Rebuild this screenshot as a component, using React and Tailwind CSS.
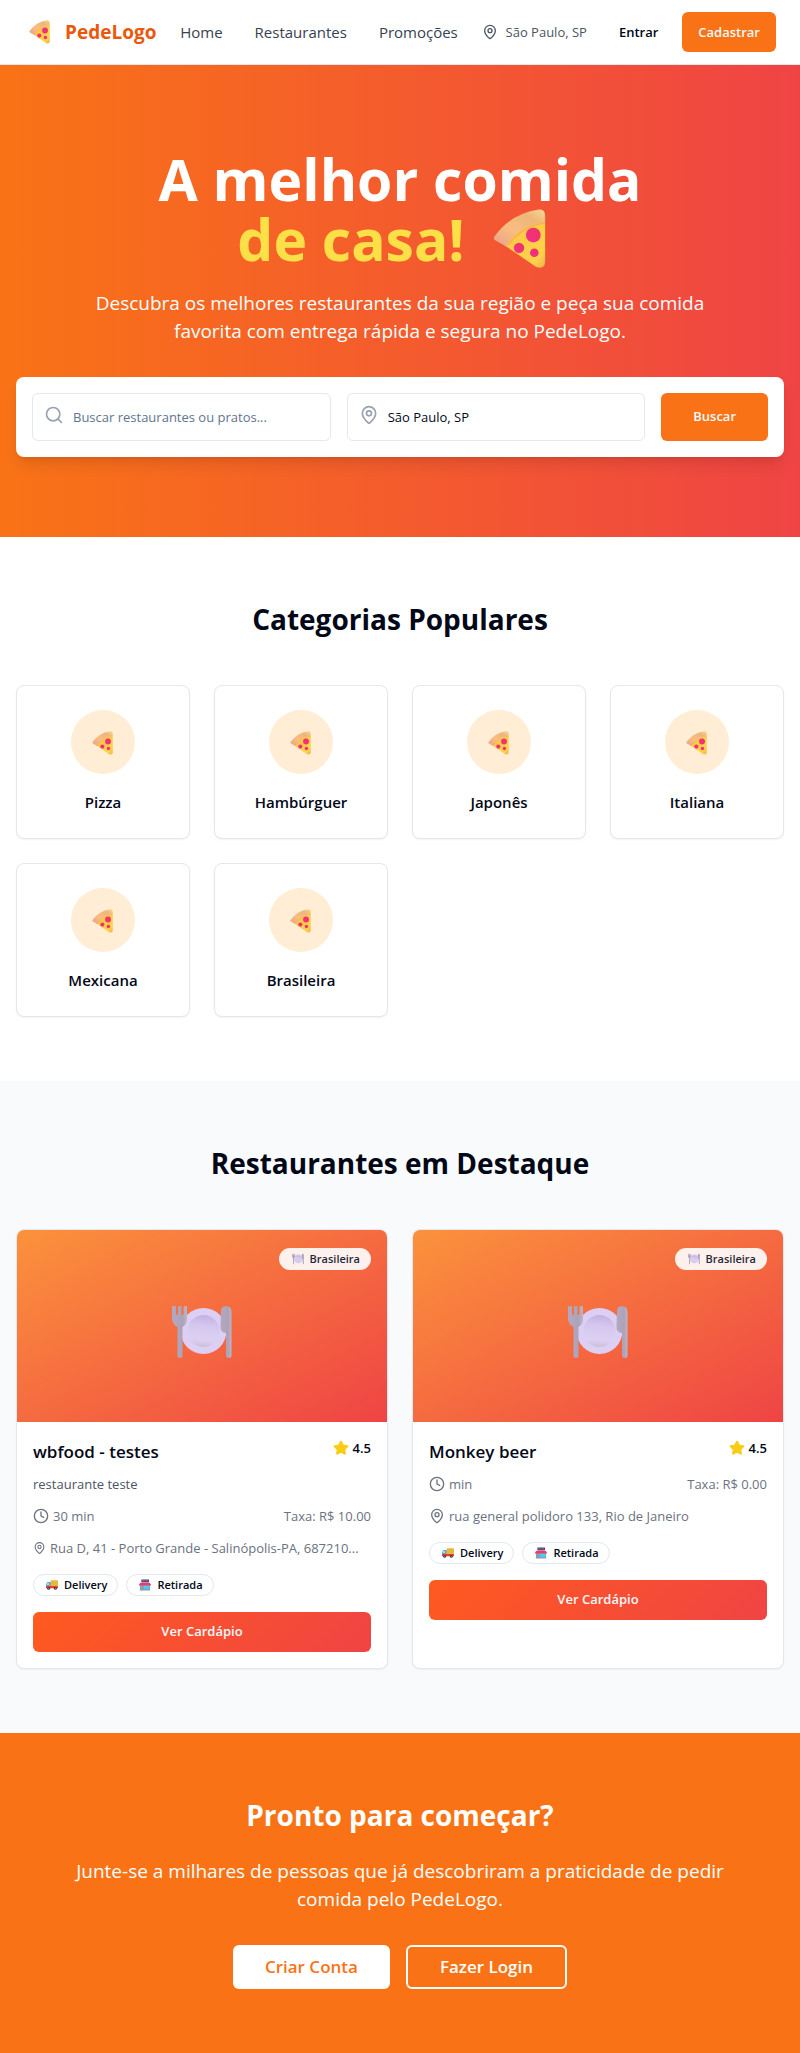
import React from "react";
import { Clock, MapPin, Search, Star } from "lucide-react";

function Pizza({ className }) {
  const id = React.useId();
  return (
    <svg viewBox="3 0 82 61" className={className} aria-hidden="true">
      <defs>
        <linearGradient id={id + "c"} x1="0" y1="1" x2="1" y2="0">
          <stop offset="0" stopColor="#e9a08a" />
          <stop offset="0.4" stopColor="#f9bd80" />
          <stop offset="0.75" stopColor="#edb67c" />
          <stop offset="1" stopColor="#fbd98f" />
        </linearGradient>
        <linearGradient id={id + "y"} x1="0" y1="0" x2="1" y2="1">
          <stop offset="0" stopColor="#fba94c" />
          <stop offset="0.3" stopColor="#fecb44" />
          <stop offset="0.8" stopColor="#ffd24c" />
          <stop offset="1" stopColor="#eeb04a" />
        </linearGradient>
        <linearGradient id={id + "p"} x1="1" y1="0" x2="0" y2="1">
          <stop offset="0" stopColor="#e8365f" />
          <stop offset="1" stopColor="#fb2c8e" />
        </linearGradient>
      </defs>
      <path d="M25 36 Q41 16 67.5 12 V54 Q67 62 58.500 59 Z" fill={"url(#" + id + "y)"} />
      <path d="M16 28 Q32 5 61 0.5 Q67 0 67.5 6 V13 Q42 16 28 38 L19 33 Q14 31 16 28 Z" fill={"url(#" + id + "c)"} />
      <path d="M30 37 Q43 18 67 14" fill="none" stroke="#f59a55" strokeWidth="1.5" opacity=".55" />
      <circle cx="55.500" cy="26.500" r="7.5" fill={"url(#" + id + "p)"} />
      <circle cx="41" cy="39.500" r="5.3" fill={"url(#" + id + "p)"} />
      <circle cx="56.500" cy="44.500" r="4.400" fill={"url(#" + id + "p)"} />
    </svg>
  );
}

function Plate({ className }) {
  const id = React.useId();
  return (
    <svg viewBox="0 0 60 52" className={className} aria-hidden="true">
      <defs>
        <linearGradient id={id + "i"} x1="0.6" y1="0" x2="0.5" y2="1">
          <stop offset="0" stopColor="#c4b0e4" />
          <stop offset="0.35" stopColor="#d5c8ee" />
          <stop offset="0.8" stopColor="#dcd0f2" />
          <stop offset="1" stopColor="#c9c0d8" />
        </linearGradient>
        <linearGradient id={id + "m"} x1="0" y1="0" x2="1" y2="0">
          <stop offset="0" stopColor="#b3a8c2" />
          <stop offset="0.7" stopColor="#ada3b8" />
          <stop offset="1" stopColor="#c0b4c6" />
        </linearGradient>
      </defs>
      <circle cx="31.500" cy="25" r="23" fill="#dccff3" />
      <circle cx="31.500" cy="25" r="16" fill={"url(#" + id + "i)"} />
      <path d="M0 1 Q0 0 1 0 H3 Q4 0 4 1 V8 Q5 10 6 8 V1 Q6 0 7 0 H8.500 Q9.500 0 9.500 1 V8 Q10.500 10 11.500 8 V1 Q11.500 0 12.500 0 H14 Q15 0 15 1 V13 Q15 18 10.500 21 V49.500 Q10.500 52 8 52 Q5.500 52 5.500 49.500 V21 Q0 18 0 13 Z" fill={"url(#" + id + "m)"} />
      <path d="M49 6 Q49 0 54 0 Q59.500 0 59.500 6 V49.500 Q59.500 52 57 52 Q54 52 54 49.500 V27 Q48 27 48.500 19 Z" fill={"url(#" + id + "m)"} />
    </svg>
  );
}

function Truck() {
  return (
    <svg viewBox="0 0 36 30" className="h-2.5 w-3 shrink-0" aria-hidden="true">
      <path d="M15 1 H34 Q36 1 36 3 V19 H14 V2 Z" fill="#e5b93f" />
      <path d="M5 6 H14 V20 H0 V15 Q1 7 5 6 Z" fill="#4ba3e8" />
      <path d="M4 9 H9 V15 H2 Q2 11 4 9 Z" fill="#9fe3fb" />
      <path d="M10 14 L14 6 V20 H9 Z" fill="#f98a2b" />
      <rect y="18" width="36" height="7" rx="2" fill="#e8402f" />
      <circle cx="8" cy="25" r="4.500" fill="#4b3553" />
      <circle cx="28" cy="25" r="4.500" fill="#4b3553" />
      <circle cx="8" cy="25" r="1.600" fill="#b7a6bd" />
      <circle cx="28" cy="25" r="1.600" fill="#b7a6bd" />
    </svg>
  );
}

function Store() {
  return (
    <svg viewBox="0 0 36 33" className="h-3 w-3 shrink-0" aria-hidden="true">
      <rect x="3" y="16" width="30" height="16" fill="#7fa6bd" />
      <rect x="7" y="0" width="23" height="8" rx="1" fill="#4a3a66" />
      <path d="M10 2 V6 M14 2 V6 M18 2 V6 M22 2 V6 M26 2 V6" stroke="#c9a5d8" strokeWidth="1.500" />
      <rect x="9" y="8" width="19" height="3" fill="#b59cc4" />
      <path d="M4 10 H32 L36 16 V18 H0 V16 Z" fill="#f0386b" />
      <rect x="5" y="20" width="7" height="12" fill="#8a9db5" />
      <rect x="15" y="19" width="16" height="9" fill="#48cdf5" />
      <path d="M2 32 H34" stroke="#8d8798" strokeWidth="1.500" />
    </svg>
  );
}

const categories = ["Pizza", "Hambúrguer", "Japonês", "Italiana", "Mexicana", "Brasileira"];

const restaurants = [
  {
    name: "wbfood - testes",
    description: "restaurante teste",
    time: "30 min",
    fee: "Taxa: R$ 10.00",
    address: "Rua D, 41 - Porto Grande - Salinópolis-PA, 687210...",
    pin: "h-4 w-[13px] shrink-0",
  },
  {
    name: "Monkey beer",
    time: "min",
    fee: "Taxa: R$ 0.00",
    address: "rua general polidoro 133, Rio de Janeiro",
    pin: "h-4 w-4 shrink-0",
  },
];

function Header() {
  return (
    <header className="flex h-[65px] items-center justify-between border-b border-slate-200 bg-white px-6">
      <a href="#" className="flex items-center gap-2">
        <Pizza className="h-6 w-[33px]" />
        <span className="text-[19px] leading-7 font-bold text-[#ea580c]">PedeLogo</span>
      </a>
      <nav className="flex gap-8 text-[15px] leading-6 text-[#374151]">
        <a href="#">Home</a>
        <a href="#restaurantes">Restaurantes</a>
        <a href="#promocoes">Promoções</a>
      </nav>
      <div className="flex items-center gap-4">
        <div className="flex items-center gap-2 text-[13px] leading-5 text-[#4b5563]">
          <MapPin size={16} />
          <span>São Paulo, SP</span>
        </div>
        <div className="flex items-center gap-2 text-[13px] leading-5 font-semibold">
          <a href="#entrar" className="px-4 py-2.5">Entrar</a>
          <a href="#cadastrar" className="rounded-md bg-[#f97316] px-4 py-2.5 text-slate-50">Cadastrar</a>
        </div>
      </div>
    </header>
  );
}

function Hero() {
  return (
    <section className="bg-linear-to-r/srgb from-[#f97316] to-[#ef4444] px-4 py-20 text-center text-white">
      <h1 className="mb-5 pt-1 text-[57px] leading-[60px] font-bold">
        A melhor comida
        <span className="flex items-center justify-center gap-4 text-[#fde047]">
          de casa!
          <Pizza className="h-[60px] w-[82px]" />
        </span>
      </h1>
      <p className="mx-auto mb-8 max-w-2xl text-[19px] leading-7">
        Descubra os melhores restaurantes da sua região e peça sua comida favorita com entrega rápida e segura no
        PedeLogo.
      </p>
      <form className="flex gap-4 rounded-lg bg-white p-4 shadow-lg" onSubmit={(e) => e.preventDefault()}>
        <label className="relative flex-1">
          <Search size={20} className="absolute top-3 left-3 text-gray-400" />
          <input
            aria-label="Buscar restaurantes ou pratos"
            placeholder="Buscar restaurantes ou pratos..."
            className="h-12 w-full rounded-md border border-slate-200 pr-3 pl-10 text-[13px] text-[#020817] placeholder:text-slate-500"
          />
        </label>
        <label className="relative flex-1">
          <MapPin size={20} className="absolute top-3 left-3 text-gray-400" />
          <input
            aria-label="Localização"
            defaultValue="São Paulo, SP"
            className="h-12 w-full rounded-md border border-slate-200 pr-3 pl-10 text-[13px] text-[#020817]"
          />
        </label>
        <button type="submit" className="h-12 rounded-md bg-[#f97316] px-8 text-[13px] font-semibold text-slate-50">
          Buscar
        </button>
      </form>
    </section>
  );
}

function Categories() {
  return (
    <section className="px-4 py-16">
      <h2 className="mb-12 text-center text-[28px] leading-9 font-bold">Categorias Populares</h2>
      <div className="grid grid-cols-4 gap-6">
        {categories.map((name) => (
          <a
            key={name}
            href="#restaurantes"
            className="flex flex-col items-center gap-4 rounded-lg border border-slate-200 bg-white p-6 shadow-xs"
          >
            <span className="flex size-16 items-center justify-center rounded-full bg-[#ffedd5] pt-0.5">
              <Pizza className="h-6 w-[33px]" />
            </span>
            <h3 className="text-[15px] leading-6 font-semibold">{name}</h3>
          </a>
        ))}
      </div>
    </section>
  );
}

function RestaurantCard({ item }) {
  return (
    <article className="overflow-hidden rounded-lg border border-slate-200 bg-white shadow-xs">
      <div className="relative flex h-48 items-center justify-center bg-linear-to-br/srgb from-[#fb923c] to-[#ef4444] pt-3">
        <Plate className="h-[52px] w-[60px]" />
        <span className="absolute top-[18px] right-4 flex h-[22px] items-center gap-1.5 rounded-full bg-white/90 pr-[11px] pl-[13px] text-[11px] font-semibold text-gray-800">
          <Plate className="h-3 w-3" />
          Brasileira
        </span>
      </div>
      <div className="p-4">
        <div className="mb-2 flex items-start justify-between">
          <h3 className="text-[17px] leading-7 font-semibold">{item.name}</h3>
          <span className="flex items-center gap-1 text-[13px] leading-5 font-semibold">
            <Star size={16} className="fill-[#facc15] text-[#facc15]" />
            4.5
          </span>
        </div>
        {item.description && <p className="mb-3 text-[13px] leading-5 text-[#4b5563]">{item.description}</p>}
        <div className="mb-3 flex items-center justify-between text-[13px] leading-5 text-[#6b7280]">
          <span className="flex items-center gap-1">
            <Clock size={16} />
            {item.time}
          </span>
          <span>{item.fee}</span>
        </div>
        <div className="mb-4 flex items-center gap-1 text-[13px] leading-5 text-[#6b7280]">
          <MapPin className={item.pin} />
          <span className="truncate">{item.address}</span>
        </div>
        <div className="mb-4 flex gap-2 text-[11px] font-semibold">
          <span className="flex h-[22px] items-center gap-1.5 rounded-full border border-slate-200 pr-2.5 pl-3">
            <Truck />
            Delivery
          </span>
          <span className="flex h-[22px] items-center gap-1.5 rounded-full border border-slate-200 pr-2.5 pl-3">
            <Store />
            Retirada
          </span>
        </div>
        <button
          type="button"
          className="h-10 w-full rounded-md bg-[linear-gradient(135deg,#ff5a1f,#ef4444)] text-[13px] font-semibold text-slate-50"
        >
          Ver Cardápio
        </button>
      </div>
    </article>
  );
}

function Featured() {
  return (
    <section id="restaurantes" className="bg-[#f9fafb] px-4 py-16">
      <h2 className="mb-12 text-center text-[28px] leading-9 font-bold">Restaurantes em Destaque</h2>
      <div className="grid grid-cols-2 gap-6">
        {restaurants.map((item) => (
          <RestaurantCard key={item.name} item={item} />
        ))}
      </div>
    </section>
  );
}

function CallToAction() {
  return (
    <section className="bg-[#f97316] px-4 py-16 text-center text-white">
      <h2 className="mb-6 text-[28px] leading-9 font-bold">Pronto para começar?</h2>
      <p className="mx-auto mb-8 max-w-2xl text-[19px] leading-7">
        Junte-se a milhares de pessoas que já descobriram a praticidade de pedir comida pelo PedeLogo.
      </p>
      <div className="flex justify-center gap-4 text-[17px] leading-7 font-semibold">
        <a href="#cadastrar" className="rounded-md bg-white px-8 py-2 text-[#f97316]">Criar Conta</a>
        <a href="#entrar" className="rounded-md border-2 border-white px-8 py-1.5">Fazer Login</a>
      </div>
    </section>
  );
}

export default function App() {
  return (
    <main className="bg-white font-['Open_Sans',sans-serif] text-[#020817]">
      <Header />
      <Hero />
      <Categories />
      <Featured />
      <CallToAction />
    </main>
  );
}
